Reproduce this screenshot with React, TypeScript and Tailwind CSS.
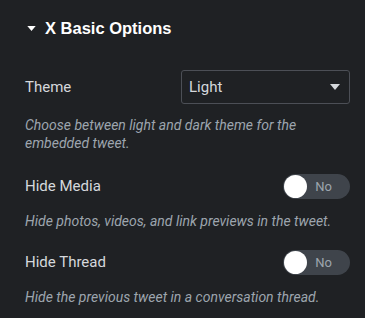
function Toggle() {
  return (
    <div className="flex h-[25px] w-[67px] items-center rounded-full bg-[#3f444b] pl-[1px] pr-[18px]">
      <span className="h-[23px] w-[23px] rounded-full bg-white" />
      <span className="ml-auto text-[13px] leading-none text-[#9da5ae]">No</span>
    </div>
  );
}

function Help({ children }: { children: React.ReactNode }) {
  return <p className="text-[14px] italic leading-[18px] text-[#9da5ae]">{children}</p>;
}

export default function App() {
  return (
    <div className="min-h-[318px] w-[365px] bg-[#1f2124] pl-[25px] pr-[15px] pt-[17px] font-['Roboto',sans-serif] text-[#d5d8dc]">
      <div className="flex items-center gap-[9px]">
        <svg width="9" height="5" viewBox="0 0 10 6" className="ml-[2px]">
          <path d="M0 0h10L5 6z" fill="#ffffff" />
        </svg>
        <h2 className="font-['Liberation_Sans',sans-serif] text-[16.5px] font-bold leading-[22px] text-white">
          X Basic Options
        </h2>
      </div>

      <div className="mt-[31px] flex items-center justify-between">
        <span className="text-[15px]">Theme</span>
        <div className="flex h-[34px] w-[169px] items-center justify-between rounded-[3px] border border-[#4c4f56] pl-[7px] pr-[9px]">
          <span className="text-[15px]">Light</span>
          <svg width="10" height="6" viewBox="0 0 10 6">
            <path d="M0 0h10L5 6z" fill="#d5d8dc" />
          </svg>
        </div>
      </div>
      <div className="mt-[12px]">
        <Help>Choose between light and dark theme for the embedded tweet.</Help>
      </div>

      <div className="mt-[22px] flex items-center justify-between">
        <span className="text-[15px]">Hide Media</span>
        <Toggle />
      </div>
      <div className="mt-[13px]">
        <Help>Hide photos, videos, and link previews in the tweet.</Help>
      </div>

      <div className="mt-[20px] flex items-center justify-between">
        <span className="text-[15px]">Hide Thread</span>
        <Toggle />
      </div>
      <div className="mt-[13px]">
        <Help>Hide the previous tweet in a conversation thread.</Help>
      </div>
    </div>
  );
}
